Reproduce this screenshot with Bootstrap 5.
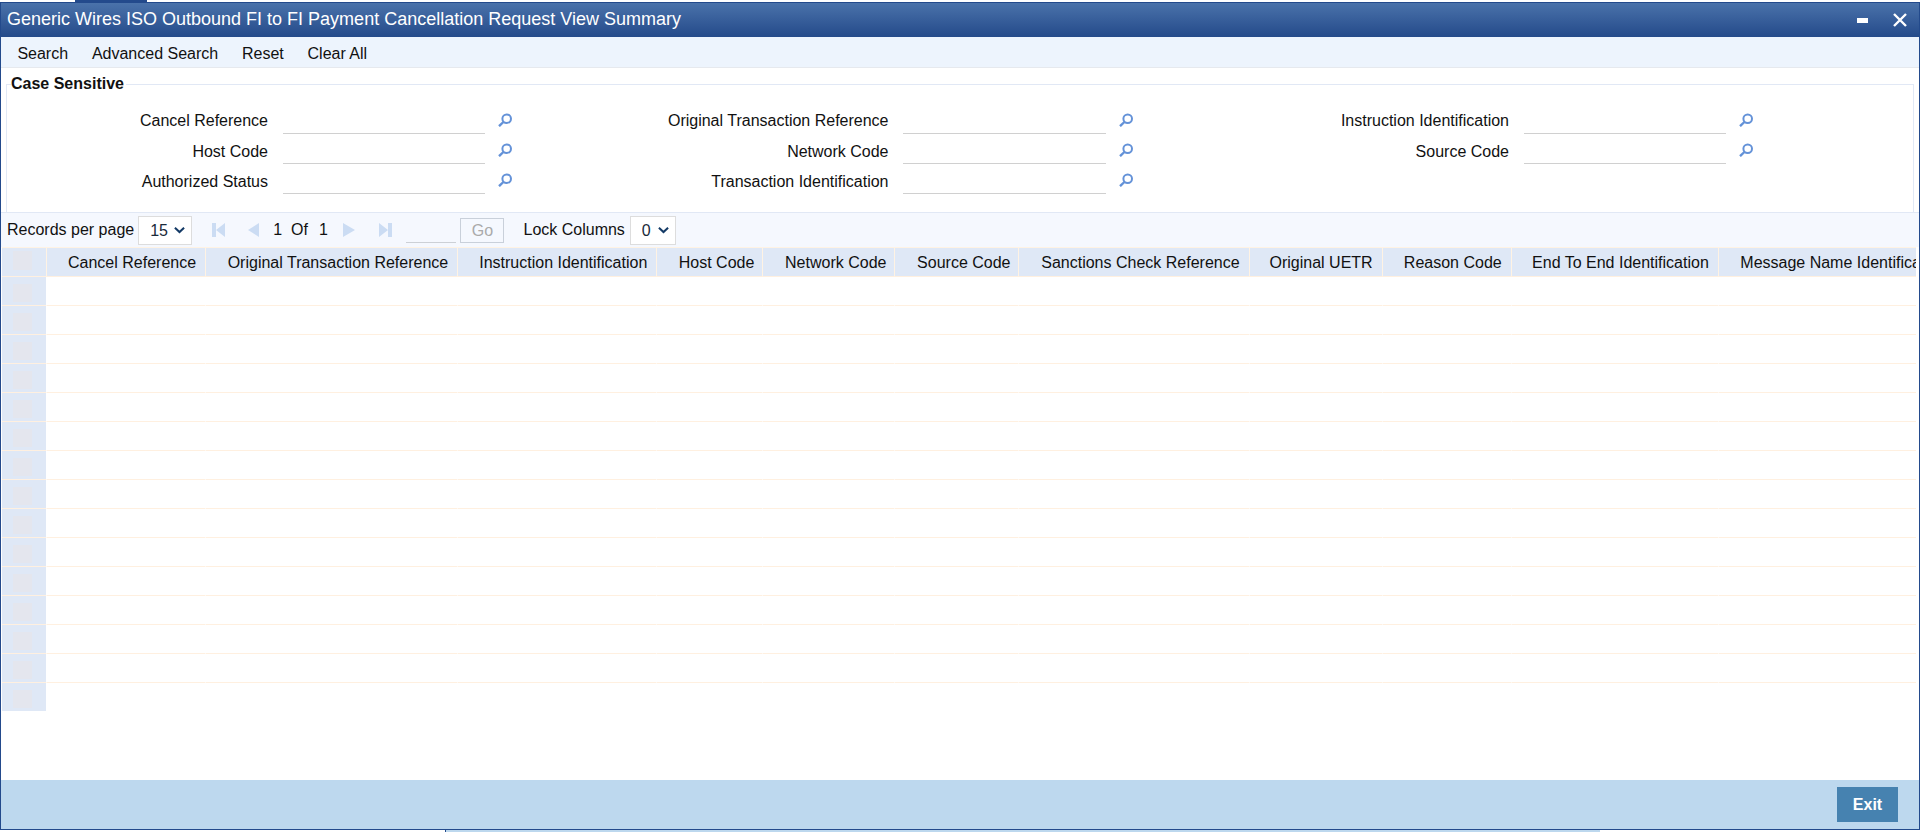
<!DOCTYPE html>
<html lang="en">
<head>
<meta charset="utf-8">
<title>Summary</title>
<link href="https://cdn.jsdelivr.net/npm/bootstrap@5.3.0/dist/css/bootstrap.min.css" rel="stylesheet">
<style>
html,body{height:832px;overflow:hidden;background:#fff}
body{font-family:"Liberation Sans",Arial,sans-serif;font-size:16px;color:#111;line-height:1.2}
.topstrip{height:2px}
.toptab{width:72px;height:2px;margin-left:75px;background:#234a8c}
.win{height:828px;border:1px solid #234a8c;display:flex;flex-direction:column;overflow:hidden}
.titlebar{height:34px;flex:none;background:linear-gradient(#4a72aa,#244a8a);color:#fff;font-size:18px;padding-left:6px}
.titlebar svg{display:block}
.winbtn{margin-right:12px}
.winbtn.minb{margin-right:25px}
.toolbar{height:31px;flex:none;background:#edf4fd;border-bottom:1px solid #e6e9ee;padding-left:8px}
.tbtn{font-size:16px;padding:4px 8.4px 0;border:0;border-radius:0;color:#111;line-height:30px;margin-right:7px}
.fieldbox{position:relative;height:128px;flex:none;margin:16px 5px 0 5px;border:1px solid #e1e8f5;border-bottom:0;padding-top:20px}
.legendtxt{position:absolute;left:4px;top:-10px;background:#fff;font-weight:700;font-size:16px;padding-right:2px;line-height:17px}
.fgrid{display:grid;grid-template-columns:repeat(3,620.5px);grid-auto-rows:30px}
.fitem{display:flex;align-items:flex-start;height:30px}
.flabel{width:261px;text-align:right;line-height:32px;flex:none;white-space:nowrap}
.fitem:nth-child(n+4) .flabel{line-height:33px}
.fitem:nth-child(n+7) .flabel{line-height:34px}
.finput{width:202.5px;height:29px;margin-left:14.5px;border:0;border-bottom:1px solid #d0d0d0;background:transparent;flex:none;padding:0;border-radius:0}
.lookup{margin-left:13px;margin-top:8px;flex:none}
.pager{height:35px;flex:none;background:#f5f8fe;border-top:1px solid #e1e8f5;padding-left:6px;white-space:nowrap}
.selbox{height:29px;padding:0 20px 0 11px;font-size:16px;border:1px solid #ddd;border-radius:0;background-color:#fff;background-image:url("data:image/svg+xml,%3csvg xmlns='http://www.w3.org/2000/svg' viewBox='0 0 12 8'%3e%3cpath fill='none' stroke='%23143a66' stroke-width='2.2' d='M1 1.5 6 6.2 11 1.5'/%3e%3c/svg%3e");background-position:right 6px center;background-size:11px 8px;color:#1a2a3a;line-height:27px}
.sel15{width:54px;margin-left:4px}
.sel0{width:46px;margin-left:5px}
.pgico{display:block;flex:none}
.pgnum{flex:none}
.pginput{width:50px;height:25px;border:0;border-bottom:1px solid #ccd0d6;background:transparent;margin-left:14px;flex:none;border-radius:0;padding:0}
.gobtn{width:44px;height:25px;margin-left:4px;padding:0;border:1px solid #c9d0da;border-radius:0;background:#f5f8fe;color:#aaa;font-size:16px;line-height:23px;opacity:1}
.gobtn:disabled{border-color:#c9d0da;background:#f5f8fe;color:#aaa;opacity:1}
.locklbl{margin-left:19px}
.gridwrap{flex:1 1 auto;overflow:hidden;min-height:0;margin:0 3px 0 1px}
.datagrid{table-layout:fixed;width:2009px;border-collapse:separate;border-spacing:0;margin:0}
.datagrid th{height:30px;padding:2px 9px 0 0;background:#dfe8f6;font-weight:400;text-align:right;white-space:nowrap;overflow:hidden;border-top:1px solid #fff3e4;border-right:1px solid #fff3e4;border-bottom:1px solid #fff0e0;line-height:26px}
.datagrid th:nth-child(5),.datagrid th:nth-child(6),.datagrid th:nth-child(7){padding-right:8px}
.datagrid th.msgcol{padding-left:21.5px;padding-right:0}
.datagrid td{height:29px;padding:0;border-right:1px solid #fff;border-bottom:1px solid #fff0e0}
.datagrid tr:last-child td{border-bottom-color:transparent}
.datagrid td.rowhd{background:#dfe8f6;background-clip:padding-box;padding:7px 0 0 11px;vertical-align:top;border-right:1px solid #fff}
.datagrid th.rowhd{padding:3px 0 0 11px;vertical-align:top}
.rowsq{display:block;width:19px;height:18px;background:#e4e6ee}
.datagrid th .rowsq{height:19px}
.footbar{height:49px;flex:none;background:#bdd8ee;padding-right:21px}
.exitbtn{width:61px;height:35px;padding:0;border:0;border-radius:0;background:#4682b0;color:#fff;font-weight:700;font-size:16px;line-height:35px}
.bottomstrip{height:2px;display:flex}
.stripgap{width:445px}
.stripblue{width:1155px;background:#bdd8ee;border-left:1px solid #234a8c}
</style>
</head>
<body>
<div class="topstrip"><div class="toptab"></div></div>
<div class="win">
  <div class="titlebar d-flex align-items-center justify-content-between">
    <span>Generic Wires ISO Outbound FI to FI Payment Cancellation Request View Summary</span>
    <div class="d-flex align-items-center">
      <svg class="winbtn minb" width="11" height="5" viewBox="0 0 11 5"><rect width="11" height="5" fill="#fff"/></svg>
      <svg class="winbtn" width="14" height="14" viewBox="0 0 14 14"><path d="M1 1 13 13M13 1 1 13" stroke="#fff" stroke-width="2.4" fill="none"/></svg>
    </div>
  </div>
  <nav class="toolbar d-flex align-items-center">
    <button type="button" class="btn tbtn">Search</button>
    <button type="button" class="btn tbtn">Advanced Search</button>
    <button type="button" class="btn tbtn">Reset</button>
    <button type="button" class="btn tbtn">Clear All</button>
  </nav>
  <svg width="0" height="0" class="position-absolute"><defs>
    <g id="mag"><circle cx="8.7" cy="5.7" r="4.3" fill="none" stroke="#6492d8" stroke-width="2"/><path d="M5.4 9 1 13.2" stroke="#6492d8" stroke-width="2.4" fill="none"/></g>
  </defs></svg>
  <div class="fieldbox">
    <div class="legendtxt">Case Sensitive</div>
    <div class="fgrid">
      <div class="fitem"><span class="flabel">Cancel Reference</span><input class="finput form-control shadow-none"><svg class="lookup" width="14" height="14"><use href="#mag"/></svg></div>
      <div class="fitem"><span class="flabel">Original Transaction Reference</span><input class="finput form-control shadow-none"><svg class="lookup" width="14" height="14"><use href="#mag"/></svg></div>
      <div class="fitem"><span class="flabel">Instruction Identification</span><input class="finput form-control shadow-none"><svg class="lookup" width="14" height="14"><use href="#mag"/></svg></div>
      <div class="fitem"><span class="flabel">Host Code</span><input class="finput form-control shadow-none"><svg class="lookup" width="14" height="14"><use href="#mag"/></svg></div>
      <div class="fitem"><span class="flabel">Network Code</span><input class="finput form-control shadow-none"><svg class="lookup" width="14" height="14"><use href="#mag"/></svg></div>
      <div class="fitem"><span class="flabel">Source Code</span><input class="finput form-control shadow-none"><svg class="lookup" width="14" height="14"><use href="#mag"/></svg></div>
      <div class="fitem"><span class="flabel">Authorized Status</span><input class="finput form-control shadow-none"><svg class="lookup" width="14" height="14"><use href="#mag"/></svg></div>
      <div class="fitem"><span class="flabel">Transaction Identification</span><input class="finput form-control shadow-none"><svg class="lookup" width="14" height="14"><use href="#mag"/></svg></div>
    </div>
  </div>
  <div class="pager d-flex align-items-center">
    <span>Records per page</span>
    <select class="form-select selbox sel15"><option>15</option></select>
    <svg class="pgico" width="13" height="14" viewBox="0 0 13 14" style="margin-left:20px"><path d="M0 0h4v14H0zM13 0v14L4 7z" fill="#cbdcf3"/></svg>
    <svg class="pgico" width="11" height="14" viewBox="0 0 11 14" style="margin-left:23px"><path d="M11 0v14L0 7z" fill="#cbdcf3"/></svg>
    <span class="pgnum" style="margin-left:14px">1</span>
    <span class="pgnum" style="margin-left:9px">Of</span>
    <span class="pgnum" style="margin-left:11px">1</span>
    <svg class="pgico" width="12" height="14" viewBox="0 0 12 14" style="margin-left:15.6px"><path d="M0 0v14L12 7z" fill="#cbdcf3"/></svg>
    <svg class="pgico" width="13" height="14" viewBox="0 0 13 14" style="margin-left:24px"><path d="M13 0H9v14h4zM0 0v14L9 7z" fill="#cbdcf3"/></svg>
    <input class="pginput form-control shadow-none">
    <button type="button" class="btn gobtn" disabled>Go</button>
    <span class="locklbl">Lock Columns</span>
    <select class="form-select selbox sel0"><option>0</option></select>
  </div>
  <div class="gridwrap">
    <table class="datagrid">
      <colgroup><col style="width:45px"><col style="width:159px"><col style="width:252px"><col style="width:199px"><col style="width:106px"><col style="width:132px"><col style="width:124px"><col style="width:230px"><col style="width:133px"><col style="width:129px"><col style="width:207px"><col style="width:292px"></colgroup>
      <thead><tr><th class="rowhd"><span class="rowsq"></span></th><th>Cancel Reference</th><th>Original Transaction Reference</th><th>Instruction Identification</th><th>Host Code</th><th>Network Code</th><th>Source Code</th><th>Sanctions Check Reference</th><th>Original UETR</th><th>Reason Code</th><th>End To End Identification</th><th class="msgcol text-start">Message Name Identification</th></tr></thead>
      <tbody id="rows"></tbody>
    </table>
  </div>
  <div class="footbar d-flex align-items-center justify-content-end">
    <button type="button" class="btn exitbtn">Exit</button>
  </div>
</div>
<div class="bottomstrip"><div class="stripgap"></div><div class="stripblue"></div></div>
<script src="https://cdn.jsdelivr.net/npm/bootstrap@5.3.0/dist/js/bootstrap.bundle.min.js"></script>
<script>
var b=document.getElementById('rows'),h='';
for(var i=0;i<15;i++){h+='<tr><td class="rowhd"><span class="rowsq"></span></td>';for(var j=0;j<11;j++)h+='<td></td>';h+='</tr>';}
b.innerHTML=h;
</script>
</body>
</html>
